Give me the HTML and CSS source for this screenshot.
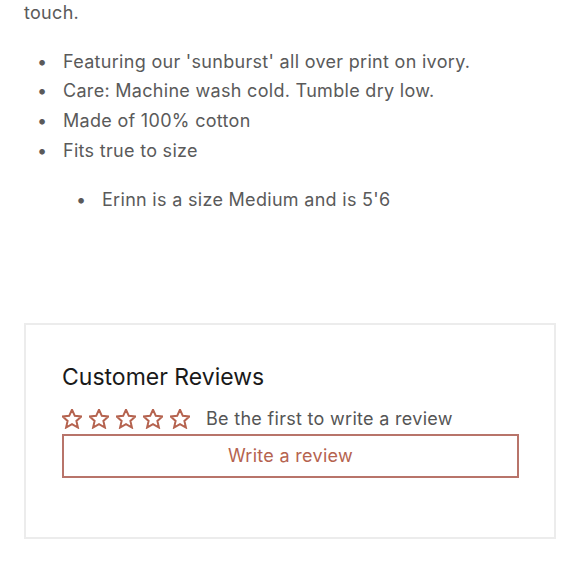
FILE: index.html
```html
<!DOCTYPE html>
<html lang="en">
<head>
<meta charset="utf-8">
<link rel="stylesheet" href="styles.css">
</head>
<body>
<div class="page">
  <div class="desc">
    <p class="lead">touch.</p>
    <ul class="list">
      <li>Featuring our 'sunburst' all over print on ivory.</li>
      <li>Care: Machine wash cold. Tumble dry low.</li>
      <li>Made of 100% cotton</li>
      <li>Fits true to size</li>
    </ul>
    <ul class="list sub">
      <li>Erinn is a size Medium and is 5'6</li>
    </ul>
  </div>
  <section class="reviews">
    <h2 class="title">Customer Reviews</h2>
    <div class="summary">
      <div class="stars">
        <svg class="star" viewBox="2 2 20 20"><path d="M12 2.6l2.8 6.2 6.7.6-5.1 4.5 1.5 6.6L12 17.1l-5.9 3.4 1.5-6.6-5.1-4.5 6.7-.6z"/></svg>
        <svg class="star" viewBox="2 2 20 20"><path d="M12 2.6l2.8 6.2 6.7.6-5.1 4.5 1.5 6.6L12 17.1l-5.9 3.4 1.5-6.6-5.1-4.5 6.7-.6z"/></svg>
        <svg class="star" viewBox="2 2 20 20"><path d="M12 2.6l2.8 6.2 6.7.6-5.1 4.5 1.5 6.6L12 17.1l-5.9 3.4 1.5-6.6-5.1-4.5 6.7-.6z"/></svg>
        <svg class="star" viewBox="2 2 20 20"><path d="M12 2.6l2.8 6.2 6.7.6-5.1 4.5 1.5 6.6L12 17.1l-5.9 3.4 1.5-6.6-5.1-4.5 6.7-.6z"/></svg>
        <svg class="star" viewBox="2 2 20 20"><path d="M12 2.6l2.8 6.2 6.7.6-5.1 4.5 1.5 6.6L12 17.1l-5.9 3.4 1.5-6.6-5.1-4.5 6.7-.6z"/></svg>
      </div>
      <span class="first">Be the first to write a review</span>
    </div>
    <a class="write" href="#">Write a review</a>
  </section>
</div>
</body>
</html>
```
FILE: styles.css
```css
html, body {
  margin: 0;
  padding: 0;
  background: #ffffff;
}
.page {
  font-family: Inter, "Liberation Sans", sans-serif;
  color: #5a5a5a;
  font-size: 18px;
  letter-spacing: 0.3px;
  line-height: 29.7px;
  padding: 0 24px;
}
.desc {
  margin-top: -2.4px;
}
.lead {
  margin: 0 0 19.3px;
}
.list {
  margin: 0;
  padding-left: 39px;
}
.list li::marker {
  content: "\2022\2002\2004";
  color: #5a5a5a;
}
.list.sub {
  margin-top: 19.5px;
  padding-left: 78px;
}
.reviews {
  margin-top: 108px;
  width: 532px;
  height: 216px;
  box-sizing: border-box;
  border: 2px solid #ececec;
  padding: 36px 36px 0;
}
.title {
  margin: 0;
  font-size: 23px;
  font-weight: 400;
  color: #1a1a1a;
  line-height: 32px;
  letter-spacing: 0;
}
.summary {
  display: flex;
  align-items: center;
  margin-top: 16px;
  height: 20px;
}
.stars {
  display: flex;
  gap: 7px;
}
.star {
  width: 20px;
  height: 20px;
  fill: none;
  stroke: #b5634f;
  stroke-width: 2;
  stroke-linejoin: miter;
}
.first {
  margin-left: 16px;
  color: #555555;
  font-size: 18px;
}
.write {
  display: flex;
  align-items: center;
  justify-content: center;
  margin-top: 5px;
  width: 457px;
  height: 44px;
  box-sizing: border-box;
  border: 2px solid #b8746a;
  color: #b5634f;
  text-decoration: none;
  font-size: 18px;
}
```
